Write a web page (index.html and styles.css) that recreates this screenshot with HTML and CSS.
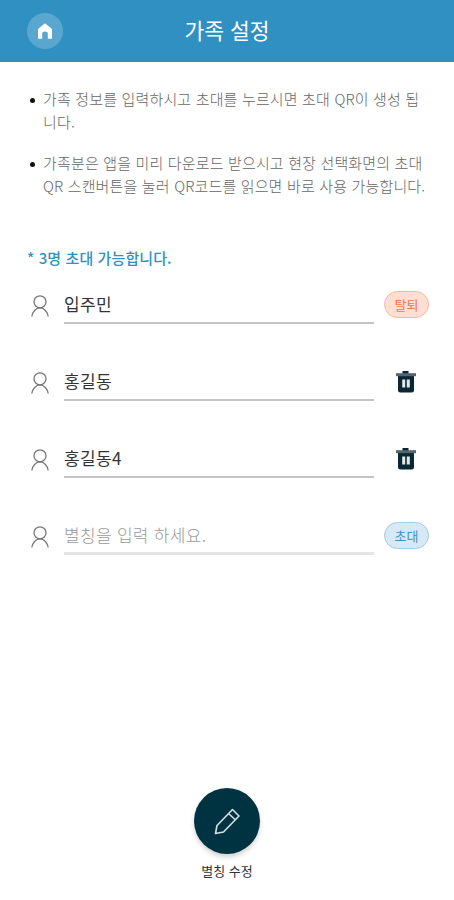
FILE: index.html
```html
<!DOCTYPE html>
<html lang="ko">
<head>
<meta charset="utf-8">
<title>가족 설정</title>
<link rel="stylesheet" href="styles.css">
</head>
<body>
<svg class="defs" aria-hidden="true">
  <symbol id="person" viewBox="0 0 18 22"><circle cx="9" cy="6.800" r="6"/><path d="M.8 21.500C1.500 17 4.800 12.900 9 12.900S16.500 17 17.200 21.500"/></symbol>
  <symbol id="trash" viewBox="0 0 22 24"><path class="dark" d="M7.500 1h6v3h-6zM3 6h16v14q0 2.500-2.500 2.500h-11Q3 22.500 3 20z"/><path class="lid" d="M1 3.200h20v3H1z"/><path class="slot" d="M7.200 9.500h3v8h-3zM11.800 9.500h3v8h-3z"/></symbol>
</svg>
<header class="header">
  <button class="home" aria-label="홈"><svg viewBox="0 0 16 16" width="16" height="16"><path d="M8 .2 15 6v9.800h-4.200V10Q10.800 8.500 8 8.500T5.200 10v5.800H1V6z"/></svg></button>
  <h1 class="title">가족 설정</h1>
</header>
<main class="main">
  <ul class="guide">
    <li>가족 정보를 입력하시고 초대를 누르시면 초대 QR이 생성 됩<br>니다.</li>
    <li>가족분은 앱을 미리 다운로드 받으시고 현장 선택화면의 초대<br>QR 스캔버튼을 눌러 QR코드를 읽으면 바로 사용 가능합니다.</li>
  </ul>
  <p class="limit">* 3명 초대 가능합니다.</p>
  <div class="members">
    <div class="row"><svg class="person"><use href="#person"/></svg><div class="field">입주민</div><div class="action"><button class="pill leave">탈퇴</button></div></div>
    <div class="row"><svg class="person"><use href="#person"/></svg><div class="field">홍길동</div><div class="action"><svg class="trash"><use href="#trash"/></svg></div></div>
    <div class="row"><svg class="person"><use href="#person"/></svg><div class="field">홍길동4</div><div class="action"><svg class="trash"><use href="#trash"/></svg></div></div>
    <div class="row"><svg class="person"><use href="#person"/></svg><div class="field empty">별칭을 입력 하세요.</div><div class="action"><button class="pill invite">초대</button></div></div>
  </div>
</main>
<footer class="footer">
  <button class="edit" aria-label="별칭 수정"><svg viewBox="0 0 28 28" width="28" height="28"><path d="M2.500 26.500 4 18.500 19.500 2.500 26 9 10.500 25zM15.500 6.500l7 6.500"/></svg></button>
  <span class="edit-label">별칭 수정</span>
</footer>
</body>
</html>
```
FILE: styles.css
```css
* { box-sizing: border-box; margin: 0; padding: 0; }
body {
  height: 900px;
  display: flex;
  flex-direction: column;
  background: #fff;
  font-family: "Noto Sans CJK KR", sans-serif;
  color: #333;
  overflow: hidden;
}
button { border: 0; font-family: inherit; }
.defs { position: absolute; width: 0; height: 0; }
.header {
  height: 62px;
  flex: none;
  display: grid;
  grid-template-columns: 36px 1fr 36px;
  align-items: center;
  padding: 0 27px;
  background: #3090c1;
}
.home {
  width: 36px;
  height: 36px;
  border-radius: 50%;
  background: #59a7ce;
  display: flex;
  align-items: center;
  justify-content: center;
}
.home path { fill: #fff; }
.title { padding-bottom: 3px; text-align: center; font-size: 21.500px; line-height: 30px; font-weight: 400; color: #fff; }
.main { flex: 1; padding: 25px 25px 0 27px; }
.guide { list-style: none; font-size: 15px; line-height: 23px; font-weight: 300; letter-spacing: .16px; color: #666; white-space: nowrap; }
.guide li { display: block; padding-left: 16px; margin-bottom: 18px; position: relative; }
.guide li::before { content: ""; position: absolute; left: 3px; top: 11px; width: 5px; height: 5px; border-radius: 50%; background: #111; }
.limit { margin-top: 50px; font-size: 15px; line-height: 22px; font-weight: 500; letter-spacing: .1px; color: #3090c1; }
.members { margin-top: 17px; }
.row { display: grid; grid-template-columns: 37px 310px 1fr; height: 77px; align-items: start; }
.person { width: 18px; height: 22px; margin: 9px 0 0 4px; fill: none; stroke: #777; stroke-width: 1.300; }
.field { height: 38px; border-bottom: 2px solid #c4c4c4; font-size: 17px; line-height: 36px; letter-spacing: .4px; color: #333; white-space: nowrap; }
.empty { border-bottom: 3px solid #e4e4e4; letter-spacing: .3px; color: #999; font-weight: 300; }
.action { display: flex; justify-content: flex-end; }
.pill { width: 45px; height: 27px; margin-top: 5px; border-radius: 14px; font-size: 13px; line-height: 23px; }
.leave { background: #ffdfd1; border: 1px solid #fbb795; color: #f0764a; }
.invite { background: #d7e9f4; border: 1px solid #a3cbe2; color: #3b91c2; }
.trash { width: 22px; height: 24px; margin: 7px 12px 0 0; }
.dark { fill: #0b2733; }
.lid { fill: #53656d; }
.slot { fill: #e3e8ea; }
.footer { height: 112px; flex: none; display: flex; flex-direction: column; align-items: center; }
.edit {
  width: 66px;
  height: 66px;
  border-radius: 50%;
  background: #003341;
  box-shadow: 0 3px 5px rgba(0, 0, 0, .18);
  display: flex;
  align-items: center;
  justify-content: center;
}
.edit path { fill: none; stroke: #d5dfe2; stroke-width: 1.600; stroke-linejoin: round; }
.edit-label { margin-top: 7px; font-size: 13px; line-height: 20px; color: #333; }
```
